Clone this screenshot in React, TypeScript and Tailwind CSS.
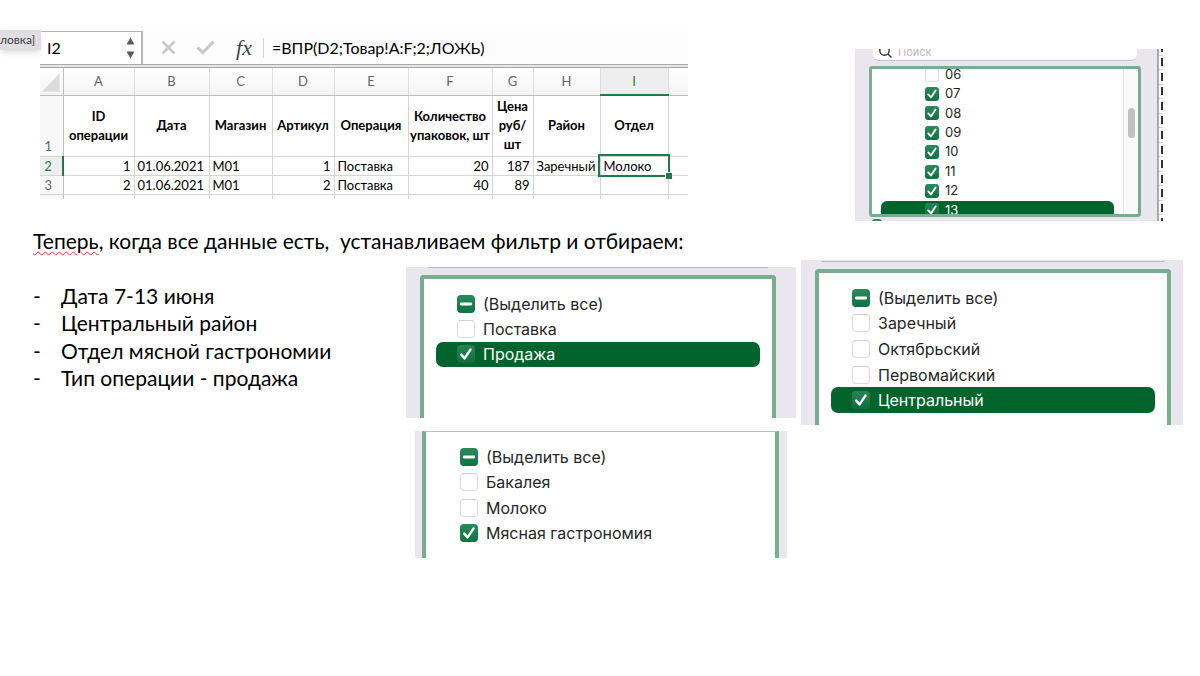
import { useEffect, useRef } from "react";

type CheckState = "on" | "off" | "mixed";

interface FilterItem {
    label: string;
    state: CheckState;
    selected?: boolean;
}

const columns = [
    { letter: "A", title: "ID операции" },
    { letter: "B", title: "Дата" },
    { letter: "C", title: "Магазин" },
    { letter: "D", title: "Артикул" },
    { letter: "E", title: "Операция" },
    { letter: "F", title: "Количество упаковок, шт" },
    { letter: "G", title: "Цена руб/ шт" },
    { letter: "H", title: "Район" },
    { letter: "I", title: "Отдел" },
];

const colWidths = [23, 71, 75, 63, 62, 74, 84, 41, 67, 68, 20];
const totalWidth = colWidths.reduce((sum, w) => sum + w, 0);

const rows = [
    ["1", "01.06.2021", "М01", "1", "Поставка", "20", "187", "Заречный", "Молоко"],
    ["2", "01.06.2021", "М01", "2", "Поставка", "40", "89", "", ""],
];

const numericColumns = [0, 3, 5, 6];

const days: FilterItem[] = [
    { label: "06", state: "off" },
    { label: "07", state: "on" },
    { label: "08", state: "on" },
    { label: "09", state: "on" },
    { label: "10", state: "on" },
    { label: "11", state: "on" },
    { label: "12", state: "on" },
    { label: "13", state: "on", selected: true },
];

const operations: FilterItem[] = [
    { label: "(Выделить все)", state: "mixed" },
    { label: "Поставка", state: "off" },
    { label: "Продажа", state: "on", selected: true },
];

const districts: FilterItem[] = [
    { label: "(Выделить все)", state: "mixed" },
    { label: "Заречный", state: "off" },
    { label: "Октябрьский", state: "off" },
    { label: "Первомайский", state: "off" },
    { label: "Центральный", state: "on", selected: true },
];

const departments: FilterItem[] = [
    { label: "(Выделить все)", state: "mixed" },
    { label: "Бакалея", state: "off" },
    { label: "Молоко", state: "off" },
    { label: "Мясная гастрономия", state: "on" },
];

const conditions = [
    "Дата 7-13 июня",
    "Центральный район",
    "Отдел мясной гастрономии",
    "Тип операции - продажа",
];

function CheckRow({ item, small = false }: { item: FilterItem; small?: boolean }) {
    const ref = useRef<HTMLInputElement>(null);

    useEffect(() => {
        if (ref.current) ref.current.indeterminate = item.state === "mixed";
    }, [item.state]);

    const filled = item.state !== "off";

    return (
        <label
            className={`flex items-center ${small ? "gap-1.5 pl-11 text-[13px] rounded-md" : "gap-2 pl-[21px] text-base rounded-[7px]"} ${item.selected ? "bg-[#00642c] text-white" : "text-[#262626]"}`}
        >
            <span className={`grid shrink-0 ${small ? "size-3.5" : "size-[18px]"}`}>
                <input
                    ref={ref}
                    type="checkbox"
                    defaultChecked={item.state === "on"}
                    className={`col-start-1 row-start-1 size-full appearance-none ${small ? "rounded-[3px]" : "rounded-[4px]"} ${filled ? (item.selected ? "bg-linear-to-b from-[#2a8257] to-[#0c6f3c]" : "bg-linear-to-b from-[#2b8a5c] to-[#0a7440]") : "border border-[#dcdcdc] border-t-[#cfcfcf] bg-white"}`}
                />
                {filled && (
                    <svg viewBox="0 0 18 18" className="pointer-events-none col-start-1 row-start-1 size-full" fill="none" stroke="white" strokeLinecap="round" strokeLinejoin="round">
                        {item.state === "mixed" ? (
                            <path d="M4.2 9H13.8" strokeWidth="2.8" />
                        ) : (
                            <path d="M4.2 9.6L7.6 13.4L13.6 4.4" strokeWidth="2.4" />
                        )}
                    </svg>
                )}
            </span>
            <span>{item.label}</span>
        </label>
    );
}

function Sheet() {
    return (
        <div className="flex pt-[30px] font-[Lato,sans-serif]">
            <div className="z-10 h-5 w-[41px] shrink-0 -mr-px bg-[#e0dee3] pt-px text-[12px] leading-[18px] text-[#3c3c3c] shadow-md">
                ловка]
            </div>
            <div className="min-w-0 flex-1 pt-px">
                <div className="flex h-[33px] items-center">
                    <div className="flex h-full w-[103px] shrink-0 items-center justify-between border-t border-r-2 border-[#b5b5b5] pl-[7px] pr-1.5">
                        <input aria-label="Имя ячейки" defaultValue="I2" className="w-12 text-base leading-5 text-black outline-none" />
                        <button type="button" aria-label="Выбрать ячейку">
                            <svg width="9" height="22" viewBox="0 0 9 22" fill="#5a5a5a">
                                <path d="M4.5 0.5L8.5 7.5H0.5Z" />
                                <path d="M4.5 21.5L8.5 14.5H0.5Z" />
                            </svg>
                        </button>
                    </div>
                    <div className="flex h-full flex-1 items-center bg-[#fdfdfd]">
                        <button type="button" aria-label="Отмена" className="ml-[18px]">
                            <svg width="15" height="15" viewBox="0 0 15 15" fill="none" stroke="#c8c8c8" strokeWidth="2.6">
                                <path d="M1.5 1.5L13.5 13.5M13.5 1.5L1.5 13.5" />
                            </svg>
                        </button>
                        <button type="button" aria-label="Ввод" className="ml-5">
                            <svg width="19" height="15" viewBox="0 0 19 15" fill="none" stroke="#c8c8c8" strokeWidth="3">
                                <path d="M1.5 7.5L6.8 12.6L17.5 1.5" />
                            </svg>
                        </button>
                        <button type="button" className="ml-5 w-[18px] font-[Liberation_Serif,serif] text-[22px] italic leading-6 text-[#444]">
                            fx
                        </button>
                        <div className="ml-2.5 h-5 w-px bg-[#d5d5d5]" />
                        <input aria-label="Строка формул" defaultValue="=ВПР(D2;Товар!A:F;2;ЛОЖЬ)" className="ml-2 min-w-0 flex-1 text-base leading-5 text-black outline-none" />
                    </div>
                </div>
                <div className="h-1 border-y border-[#ababab] bg-[#e6e6e6]" />
                <table className="w-full table-fixed border-collapse text-[13px] leading-[19px] text-black">
                    <colgroup>
                        {colWidths.map((w, i) => (
                            <col key={i} style={{ width: `${(w / totalWidth) * 100}%` }} />
                        ))}
                    </colgroup>
                    <thead>
                        <tr className="h-[27px] bg-linear-to-b from-white to-[#f4f4f4] text-[#666]">
                            <th className="border-r border-b border-[#bdbdbd] p-0">
                                <svg viewBox="0 0 23 26" className="block h-[26px] w-full" fill="#dcdcdc">
                                    <path d="M20 5V24H2Z" />
                                </svg>
                            </th>
                            {columns.map((c) => (
                                <th
                                    key={c.letter}
                                    scope="col"
                                    className={`p-0 font-normal ${c.letter === "I" ? "border-b-2 border-[#1f7a45] bg-[#eeeeee] text-[#1f7a45]" : "border-r border-b border-r-[#dedede] border-b-[#bdbdbd]"}`}
                                >
                                    {c.letter}
                                </th>
                            ))}
                            <th className="border-b border-l border-b-[#bdbdbd] border-l-[#dedede] p-0" />
                        </tr>
                    </thead>
                    <tbody>
                        <tr className="h-[61px]">
                            <th scope="row" className="border-r border-b border-r-[#bdbdbd] border-b-[#d4d4d4] bg-[#f8f8f8] p-0 pr-1.5 align-bottom font-normal text-[#666]">1</th>
                            {columns.map((c) => (
                                <td key={c.letter} className="border-r border-b border-[#d4d4d4] p-0 text-center font-bold">
                                    {c.title}
                                </td>
                            ))}
                            <td className="border-b border-[#d4d4d4]" />
                        </tr>
                        {rows.map((row, r) => (
                            <tr key={r} className="h-[19px]">
                                <th
                                    scope="row"
                                    className={`border-b border-b-[#d4d4d4] p-0 pr-1.5 font-normal leading-[18px] ${r === 0 ? "border-r-2 border-r-[#1f7a45] bg-[#eeeeee] text-[#1f7a45]" : "border-r border-r-[#bdbdbd] bg-[#f8f8f8] text-[#666]"}`}
                                >
                                    {r + 2}
                                </th>
                                {row.map((value, i) => (
                                    <td
                                        key={i}
                                        className={`whitespace-nowrap border-r border-b border-[#d4d4d4] px-[3px] py-0 leading-[18px] ${numericColumns.includes(i) ? "text-right" : ""} ${r === 0 && i === 8 ? "relative outline-2 outline-[#1f7a45]" : ""}`}
                                    >
                                        {value}
                                        {r === 0 && i === 8 && (
                                            <span className="absolute -right-1 -bottom-1 size-[7px] border-t border-l border-white bg-[#1f7a45]" />
                                        )}
                                    </td>
                                ))}
                                <td className="border-b border-[#d4d4d4] p-0" />
                            </tr>
                        ))}
                        <tr className="h-[5px]">
                            <th className="border-r border-[#bdbdbd] bg-[#f8f8f8] p-0" />
                            {columns.map((c) => (
                                <td key={c.letter} className="border-r border-[#d4d4d4] p-0" />
                            ))}
                            <td className="p-0" />
                        </tr>
                    </tbody>
                </table>
            </div>
        </div>
    );
}

function DatePanel() {
    return (
        <div className="mt-[49px] flex h-[172px] overflow-hidden font-[Inter,sans-serif]">
            <div className="flex min-w-0 flex-1 flex-col bg-[#e9e7ed] pr-4 pl-3.5">
                <div className="mr-1 ml-1 flex h-3 shrink-0 items-end gap-1.5 overflow-hidden rounded-b-md border-b border-[#c4c2c8] bg-white pl-1.5">
                    <svg width="13" height="14" viewBox="0 0 13 14" fill="none" stroke="#333" strokeWidth="1.4" className="shrink-0">
                        <circle cx="5.5" cy="4.5" r="4.7" />
                        <path d="M9 8L12.4 11.6" />
                    </svg>
                    <input aria-label="Поиск" placeholder="Поиск" className="h-[15px] min-w-0 flex-1 text-[11px] leading-[15px] outline-none placeholder:text-[#b9b9b9]" />
                </div>
                <div className="mt-[5px] flex h-[151px] shrink-0 overflow-hidden rounded-[3px] border-3 border-[#7aad8f] bg-white">
                    <div className="-mt-1 mr-[9px] ml-[9px] grid h-[155px] flex-1 auto-rows-fr">
                        {days.map((d) => (
                            <CheckRow key={d.label} item={d} small />
                        ))}
                    </div>
                    <div className="flex w-[15px] justify-center border-l border-[#e8e8e8] bg-[#fafafa] pt-[39px]">
                        <div className="h-[30px] w-[7px] rounded-full bg-[#c1c1c1]" />
                    </div>
                </div>
                <div className="mt-0.5 ml-[3px] h-3 w-2.5 shrink-0 rounded-[3px] bg-[#2b8a5c]" />
            </div>
            {/* edge of the sheet showing behind the filter window */}
            <div className="-mt-2 grid h-[189px] w-[6px] auto-rows-fr border-l-2 border-[#a9a9a9]">
                {Array.from({ length: 13 }, (_, i) => (
                    <div key={i} className="flex items-center justify-end border-b border-[#d4d4d4]">
                        <div className="h-2 w-0.5 bg-[#333]" />
                    </div>
                ))}
            </div>
        </div>
    );
}

export default function App() {
    return (
        <main className="min-h-screen overflow-hidden bg-white text-black">
            <div className="grid grid-cols-[688fr_308fr] gap-x-[167px] pr-[37px]">
                <div>
                    <Sheet />
                    <h1 className="mt-7 h-[33px] whitespace-pre pl-[33px] font-[Lato,sans-serif] text-[21px] leading-7">
                        <span className="underline decoration-red-500 decoration-wavy decoration-1 underline-offset-2">Теперь</span>
                        {", когда все данные есть,  устанавливаем фильтр и отбираем:"}
                    </h1>
                </div>
                <DatePanel />
            </div>

            <div className="grid grid-cols-[401fr_390fr_382fr] items-start gap-x-[5px] pr-[17px]">
                <ul className="mt-[22px] grid h-[110px] auto-rows-fr pl-[33px] font-[Lato,sans-serif] text-[21px] leading-7">
                    {conditions.map((c) => (
                        <li key={c} className="flex items-center whitespace-nowrap">
                            <span className="w-7">-</span>
                            {c}
                        </li>
                    ))}
                </ul>

                <div className="mt-[7px] font-[Inter,sans-serif]">
                    <section aria-label="Операция" className="h-[151px] overflow-hidden bg-[#e9e7ed] pr-5 pl-3.5">
                        <div className="mx-2 h-px bg-[#b9b7bd]" />
                        <div className="mt-[7px] h-[144px] rounded-t-[4px] border-4 border-b-0 border-[#7aad8f] bg-white px-3 pt-3">
                            <div className="grid h-[76px] auto-rows-fr">
                                {operations.map((o) => (
                                    <CheckRow key={o.label} item={o} />
                                ))}
                            </div>
                        </div>
                    </section>
                    <section aria-label="Отдел" className="mt-[13px] mr-[9px] ml-[9px] h-[127px] bg-[#e9e7ed] pr-2 pl-[7px]">
                        <div className="h-full border-x-4 border-t border-x-[#7aad8f] border-t-[#a9cbb5] bg-white px-3 pt-3">
                            <div className="ml-px grid h-[102px] auto-rows-fr">
                                {departments.map((d) => (
                                    <CheckRow key={d.label} item={d} />
                                ))}
                            </div>
                        </div>
                    </section>
                </div>

                <section aria-label="Район" className="h-[165px] overflow-hidden bg-[#e9e7ed] pr-3 pl-3.5 font-[Inter,sans-serif]">
                    <div className="mx-1.5 h-0.5 rounded-b-md border-b border-[#b9b7bd]" />
                    <div className="mt-[7px] h-[156px] rounded-t-[4px] border-4 border-b-0 border-[#7aad8f] bg-white px-3 pt-3">
                        <div className="grid h-[128px] auto-rows-fr">
                            {districts.map((d) => (
                                <CheckRow key={d.label} item={d} />
                            ))}
                        </div>
                    </div>
                </section>
            </div>
        </main>
    );
}
